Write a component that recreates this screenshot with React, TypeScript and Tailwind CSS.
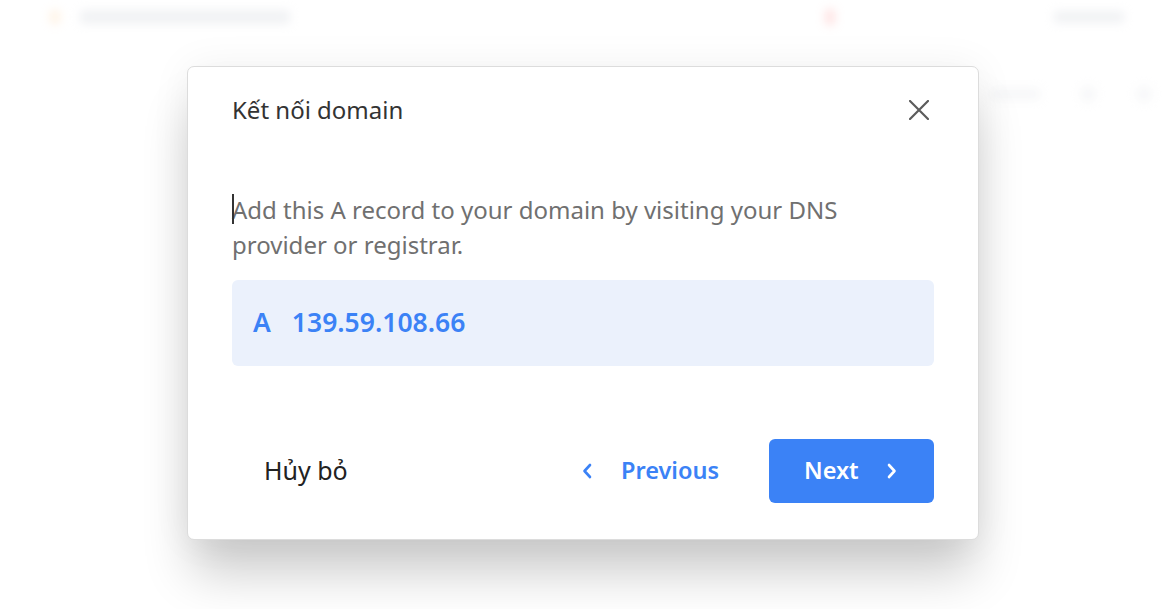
import React from 'react';

const font = { fontFamily: '"Noto Sans", "Open Sans", sans-serif' };

// faint, blurred page behind the dialog
const BackgroundPage: React.FC = () => (
  <div className="absolute inset-0 blur-[5px] opacity-50 select-none">
    <div className="flex items-center h-[34px] px-[50px]">
      <div className="w-[10px] h-[14px] rounded-sm bg-orange-200" />
      <div className="ml-[20px] w-[210px] h-[14px] rounded bg-gray-300" />
      <div className="ml-[535px] w-[10px] h-[16px] rounded bg-red-300" />
      <div className="ml-auto w-[70px] h-[12px] rounded bg-gray-300" />
    </div>
    <div className="flex items-center h-[20px] mt-[50px] pl-[990px] gap-[40px]">
      <div className="w-[50px] h-[12px] rounded bg-gray-200" />
      <div className="w-[16px] h-[16px] rounded-full bg-gray-200" />
      <div className="w-[16px] h-[16px] rounded-full bg-gray-200" />
    </div>
  </div>
);

const ChevronLeft: React.FC<{ className?: string }> = ({ className }) => (
  <svg
    viewBox="0 0 10 16"
    className={className}
    fill="none"
    stroke="currentColor"
    strokeWidth="2.6"
    strokeLinecap="round"
    strokeLinejoin="round"
  >
    <path d="M8 2 L2.5 8 L8 14" />
  </svg>
);

const ChevronRight: React.FC<{ className?: string }> = ({ className }) => (
  <svg
    viewBox="0 0 10 16"
    className={className}
    fill="none"
    stroke="currentColor"
    strokeWidth="2.6"
    strokeLinecap="round"
    strokeLinejoin="round"
  >
    <path d="M2 2 L7.5 8 L2 14" />
  </svg>
);

const CloseIcon: React.FC = () => (
  <svg
    viewBox="0 0 20 20"
    className="w-[20px] h-[20px]"
    fill="none"
    stroke="currentColor"
    strokeWidth="2.2"
    strokeLinecap="square"
  >
    <path d="M1 1 L19 19 M19 1 L1 19" />
  </svg>
);

const App: React.FC = () => {
  return (
    <div className="relative w-full h-[609px] bg-white overflow-hidden" style={font}>
      <BackgroundPage />
      <div className="absolute inset-0 bg-white/40">
        <div className="pt-[66px] pl-[187px]">
          <div className="w-[792px] h-[474px] bg-white border border-[#dcdcdc] rounded-[7px] shadow-[0_38px_50px_-5px_rgba(0,0,0,0.2),0_0_40px_rgba(0,0,0,0.06)] px-[44px] pt-[27px]">
            {/* header */}
            <div className="flex items-center justify-between h-[32px]">
              <h2 className="text-[24px] leading-[32px] text-[#333] font-normal">Kết nối domain</h2>
              <button className="text-[#5c5c5c] mr-[5px] flex items-center justify-center">
                <CloseIcon />
              </button>
            </div>

            {/* description */}
            <div className="relative mt-[66px]">
              <span className="absolute left-0 top-[2px] w-[1.5px] h-[30px] bg-[#333]" />
              <p className="text-[24px] leading-[35px] text-[#707070] font-normal">
                Add this A record to your domain by visiting your DNS
                <br />
                provider or registrar.
              </p>
            </div>

            {/* record */}
            <div className="mt-[18px] h-[86px] rounded-[6px] bg-[#ebf1fc] flex items-center px-[21px] text-[26.5px] font-semibold text-[#3b82f6]">
              <span>A</span>
              <span className="ml-[21px]">139.59.108.66</span>
            </div>

            {/* footer */}
            <div className="mt-[73px] flex items-center">
              <button className="ml-[32px] text-[25px] text-[#222]">Hủy bỏ</button>
              <div className="ml-auto flex items-center">
                <button className="flex items-center text-[23.5px] font-semibold text-[#3b82f6]">
                  <ChevronLeft className="w-[10px] h-[16px]" />
                  <span className="ml-[29px]">Previous</span>
                </button>
                <button className="ml-[50px] w-[165px] h-[64px] rounded-[6px] bg-[#3b82f6] text-white text-[23.5px] font-semibold flex items-center pl-[35px]">
                  <span>Next</span>
                  <ChevronRight className="ml-[28px] w-[10px] h-[16px]" />
                </button>
              </div>
            </div>
          </div>
        </div>
      </div>
    </div>
  );
};

export default App;
